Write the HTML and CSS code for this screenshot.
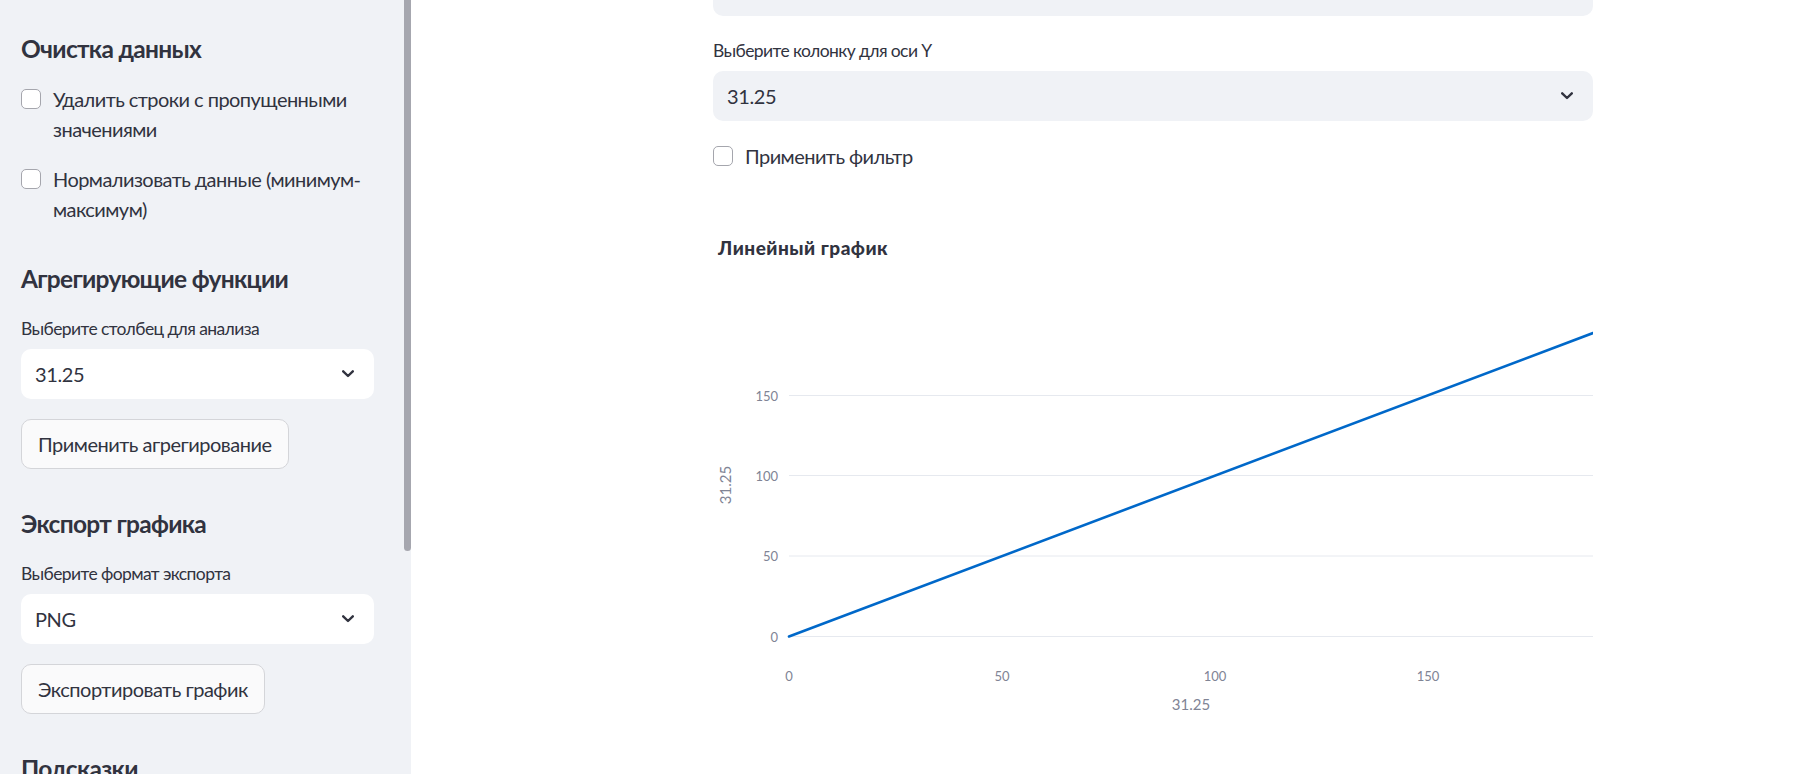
FILE: index.html
```html
<!DOCTYPE html>
<html lang="ru">
<head>
<meta charset="utf-8">
<title>Streamlit</title>
<link rel="stylesheet" href="styles.css">
</head>
<body>
<div class="app">
  <aside class="sidebar">
    <div class="sidebar-content">
      <h3 class="heading">Очистка данных</h3>
      <label class="checkbox">
        <span class="box"></span>
        <span class="check-text">Удалить строки с пропущенными значениями</span>
      </label>
      <label class="checkbox">
        <span class="box"></span>
        <span class="check-text">Нормализовать данные (минимум-максимум)</span>
      </label>

      <h3 class="heading">Агрегирующие функции</h3>
      <div class="field">
        <div class="label">Выберите столбец для анализа</div>
        <div class="select select-white">
          <span class="value">31.25</span>
          <svg class="chevron" width="12" height="8" viewBox="0 0 12 8"><path d="M1.2 1.3 L6 6 L10.8 1.3" fill="none" stroke="#31333f" stroke-width="2.4" stroke-linecap="round" stroke-linejoin="round"/></svg>
        </div>
      </div>
      <div><button class="btn">Применить агрегирование</button></div>

      <h3 class="heading">Экспорт графика</h3>
      <div class="field">
        <div class="label">Выберите формат экспорта</div>
        <div class="select select-white">
          <span class="value">PNG</span>
          <svg class="chevron" width="12" height="8" viewBox="0 0 12 8"><path d="M1.2 1.3 L6 6 L10.8 1.3" fill="none" stroke="#31333f" stroke-width="2.4" stroke-linecap="round" stroke-linejoin="round"/></svg>
        </div>
      </div>
      <div><button class="btn">Экспортировать график</button></div>

      <h3 class="heading">Подсказки</h3>
    </div>
    <div class="scroll-thumb"></div>
  </aside>

  <main class="main">
    <div class="block">
      <div class="select select-grey select-cut"></div>
      <div class="field">
        <div class="label">Выберите колонку для оси Y</div>
        <div class="select select-grey">
          <span class="value">31.25</span>
          <svg class="chevron" width="12" height="8" viewBox="0 0 12 8"><path d="M1.2 1.3 L6 6 L10.8 1.3" fill="none" stroke="#31333f" stroke-width="2.4" stroke-linecap="round" stroke-linejoin="round"/></svg>
        </div>
      </div>
      <label class="checkbox">
        <span class="box"></span>
        <span class="check-text">Применить фильтр</span>
      </label>
      <div class="chart">
        <svg width="880" height="590" viewBox="0 0 880 590">
          <text class="chart-title" x="5" y="64">Линейный график</text>
          <g class="grid">
            <line x1="76" y1="204.5" x2="880" y2="204.5"/>
            <line x1="76" y1="284.5" x2="880" y2="284.5"/>
            <line x1="76" y1="365" x2="880" y2="365"/>
            <line x1="76" y1="445.5" x2="880" y2="445.5"/>
          </g>
          <g class="ytick">
            <text x="65" y="209.5">150</text>
            <text x="65" y="289.5">100</text>
            <text x="65" y="370">50</text>
            <text x="65" y="450.5">0</text>
          </g>
          <g class="xtick">
            <text x="76" y="489.5">0</text>
            <text x="289" y="489.5">50</text>
            <text x="502" y="489.5">100</text>
            <text x="715" y="489.5">150</text>
          </g>
          <text class="axis-title" x="478" y="519">31.25</text>
          <text class="axis-title" transform="translate(18 294) rotate(-90)" x="0" y="0">31.25</text>
          <line class="series" x1="76" y1="445.5" x2="880" y2="142"/>
        </svg>
      </div>
    </div>
  </main>
</div>
</body>
</html>
```
FILE: styles.css
```css
* { box-sizing: border-box; }
html, body { margin: 0; padding: 0; }
body {
  font-family: "Lato", "Noto Sans", sans-serif;
  color: #31333f;
  background: #ffffff;
  width: 1815px;
  height: 774px;
  overflow: hidden;
}
.app {
  display: flex;
  height: 774px;
}

/* Sidebar */
.sidebar {
  position: relative;
  width: 411px;
  flex: 0 0 411px;
  background: #f0f2f6;
  height: 774px;
  overflow: hidden;
}
.sidebar-content {
  display: flex;
  flex-direction: column;
  gap: 20px;
  padding: 14px 37px 0 21px;
}
.scroll-thumb {
  position: absolute;
  top: 0;
  right: 0;
  width: 7px;
  height: 551px;
  background: #a6a7af;
  border-radius: 0 0 4px 4px;
}

.heading {
  margin: 0;
  padding-top: 20px;
  font-size: 24.5px;
  font-weight: 700;
  line-height: 30px;
  letter-spacing: -0.7px;
  color: #31333f;
}

.checkbox {
  display: flex;
  align-items: flex-start;
  gap: 12px;
  font-size: 20px;
  line-height: 30px;
  letter-spacing: -0.55px;
}
.box {
  flex: 0 0 20px;
  width: 20px;
  height: 20px;
  margin-top: 5px;
  border: 1px solid #a5a6ad;
  border-radius: 5px;
  background: #ffffff;
}
.check-text { padding-right: 10px; }

.field { display: flex; flex-direction: column; gap: 5px; }
.label {
  font-size: 17.5px;
  line-height: 30px;
  letter-spacing: -0.6px;
  color: #31333f;
}
.select {
  height: 50px;
  border-radius: 10px;
  display: flex;
  align-items: center;
  justify-content: space-between;
  padding: 0 20px 0 14px;
  font-size: 20px;
  letter-spacing: -0.4px;
}
.select-white { background: #ffffff; }
.select-grey { background: #f0f2f6; }
.chevron { display: block; }

.btn {
  font-family: inherit;
  font-size: 20px;
  letter-spacing: -0.5px;
  color: #31333f;
  height: 50px;
  padding: 0 16px;
  background: #fafafb;
  border: 1px solid #d4d5d9;
  border-radius: 10px;
}

/* Main */
.main {
  flex: 1;
  padding-left: 302px;
}
.block {
  width: 880px;
  display: flex;
  flex-direction: column;
  gap: 20px;
  margin-top: -34px;
}
.chart { height: 600px; }
.chart svg { display: block; font-family: "Lato", "Noto Sans", sans-serif; }
.chart-title { font-size: 19px; font-weight: 900; fill: #31333f; letter-spacing: 0.5px; }
.grid line { stroke: #e6e9ef; stroke-width: 1; }
.ytick text { font-size: 13px; fill: #808495; text-anchor: end; }
.xtick text { font-size: 13px; fill: #808495; text-anchor: middle; }
.axis-title { font-size: 15px; fill: #808495; text-anchor: middle; }
.series { stroke: #0068c9; stroke-width: 2.6; stroke-linecap: round; }
```
